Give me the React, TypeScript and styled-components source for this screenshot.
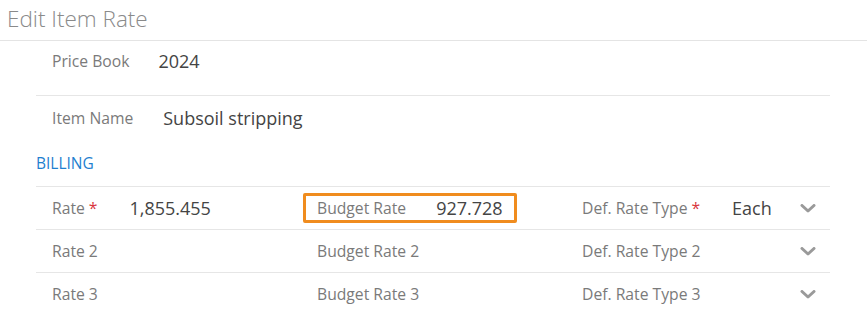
import React from "react";
import styled, { createGlobalStyle } from "styled-components";

const Global = createGlobalStyle`
  html, body { margin: 0; padding: 0; background: #fff; }
  body { font-family: "Open Sans", "Liberation Sans", sans-serif; }
  * { box-sizing: border-box; }
`;

const Page = styled.div`
  width: 867px;
  height: 326px;
  overflow: hidden;
  background: #fff;
`;

const Header = styled.div`
  height: 41px;
  border-bottom: 1px solid #e4e4e4;
  padding-left: 7px;
  display: flex;
  align-items: center;
  padding-bottom: 4px;
`;

const Title = styled.h1`
  margin: 0;
  font-size: 22.5px;
  font-weight: 300;
  color: #8a8a8a;
`;

const Body = styled.div`
  margin-left: 36px;
  width: 794px;
`;

const InfoRow = styled.div<{ $h: number; $pb?: number; $line?: boolean; $gap?: number }>`
  height: ${(p) => p.$h}px;
  padding: 0 16px ${(p) => p.$pb ?? 0}px;
  display: flex;
  align-items: center;
  gap: ${(p) => p.$gap ?? 29}px;
  border-bottom: ${(p) => (p.$line ? "1px solid #e6e6e6" : "none")};
`;

const Label = styled.span`
  font-size: 15.7px;
  color: #7a7a7a;
  white-space: nowrap;
`;

const Req = styled.span`
  color: #d9363e;
  margin-left: 4px;
`;

const Value = styled.span`
  font-size: 18px;
  color: #444;
  white-space: nowrap;
`;

const Section = styled.div`
  height: 46px;
  display: flex;
  align-items: center;
  font-size: 15.5px;
  color: #1f7fcf;
`;

const GridRow = styled.div`
  height: 43px;
  border-top: 1px solid #e6e6e6;
  display: grid;
  grid-template-columns: 265px 265px 264px;
`;

const Cell = styled.div<{ $gap?: number; $flush?: boolean }>`
  display: flex;
  align-items: center;
  padding-left: ${(p) => (p.$flush ? 0 : 16)}px;
  gap: ${(p) => p.$gap ?? 30}px;
  position: relative;
`;

const HighlightField = styled.div`
  display: flex;
  align-items: center;
  gap: 30px;
  width: 214px;
  margin: -1px 0 -1px 2px;
  padding-left: 11px;
  border: 3px solid #f08c1e;
  border-radius: 2px;
`;

const Chevron = styled.svg`
  position: absolute;
  right: 14px;
  top: 50%;
  margin-top: -4px;
  width: 16px;
  height: 9px;
`;

const ChevronIcon = () => (
  <Chevron viewBox="0 0 16 9">
    <path d="M2 1.5 L8 7 L14 1.5" fill="none" stroke="#9a9a9a" strokeWidth="3" strokeLinecap="round" strokeLinejoin="round" />
  </Chevron>
);

const rows = [
  { rate: "Rate", req: true, rateVal: "1,855.455", budget: "Budget Rate", budgetVal: "927.728", type: "Def. Rate Type", typeVal: "Each" },
  { rate: "Rate 2", req: false, rateVal: "", budget: "Budget Rate 2", budgetVal: "", type: "Def. Rate Type 2", typeVal: "" },
  { rate: "Rate 3", req: false, rateVal: "", budget: "Budget Rate 3", budgetVal: "", type: "Def. Rate Type 3", typeVal: "" },
];

export default function App() {
  return (
    <Page>
      <Global />
      <Header>
        <Title>Edit Item Rate</Title>
      </Header>
      <Body>
        <InfoRow $h={55} $pb={14} $line>
          <Label>Price Book</Label>
          <Value>2024</Value>
        </InfoRow>
        <InfoRow $h={44} $gap={30}>
          <Label>Item Name</Label>
          <Value>Subsoil stripping</Value>
        </InfoRow>
        <Section>BILLING</Section>
        {rows.map((r, i) => (
          <GridRow key={r.rate}>
            <Cell $gap={32}>
              <Label>
                {r.rate}
                {r.req && <Req>*</Req>}
              </Label>
              {r.rateVal && <Value>{r.rateVal}</Value>}
            </Cell>
            {i === 0 ? (
              <Cell $flush>
                <HighlightField>
                  <Label>{r.budget}</Label>
                  <Value>{r.budgetVal}</Value>
                </HighlightField>
              </Cell>
            ) : (
              <Cell>
                <Label>{r.budget}</Label>
              </Cell>
            )}
            <Cell $gap={32}>
              <Label>
                {r.type}
                {r.req && <Req>*</Req>}
              </Label>
              {r.typeVal && <Value>{r.typeVal}</Value>}
              <ChevronIcon />
            </Cell>
          </GridRow>
        ))}
      </Body>
    </Page>
  );
}
